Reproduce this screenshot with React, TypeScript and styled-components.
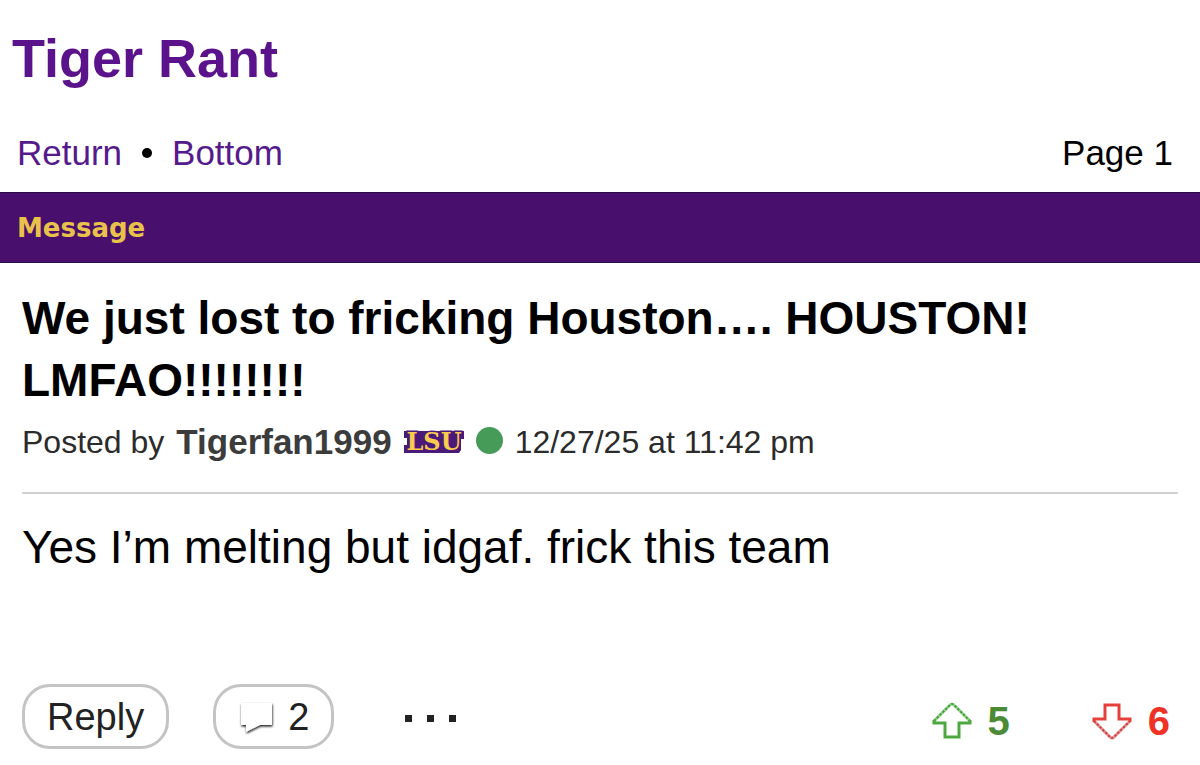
import React from "react";
import styled, { createGlobalStyle } from "styled-components";

const GlobalStyle = createGlobalStyle`
  * { box-sizing: border-box; }
  body {
    margin: 0;
    background: #fff;
    color: #000;
    font-family: "Liberation Sans", Arial, Helvetica, sans-serif;
  }
`;

const BoardHeader = styled.header`
  padding: 27px 12px 0;
`;

const BoardTitle = styled.h1`
  margin: 0;
  font-size: 54px;
  line-height: 62px;
  font-weight: 700;
  color: #5b138b;
`;

const TopicNav = styled.nav`
  display: flex;
  align-items: center;
  gap: 20px;
  padding: 43px 27px 18px 17px;
  font-size: 35px;
  line-height: 42px;
`;

const NavLink = styled.a`
  color: #551a8b;
  text-decoration: none;
`;

const Bullet = styled.span`
  width: 10px;
  height: 10px;
  border-radius: 50%;
  background: #000;
`;

const PageLabel = styled.span`
  margin-left: auto;
`;

const ColumnBar = styled.h2`
  margin: 0;
  padding: 19px 17px 18px;
  background: #490f6c;
  border-top: 1px solid #2e0a4a;
  border-bottom: 1px solid #2e0a4a;
  color: #e8c24a;
  font: 700 26px/32px "DejaVu Sans", Verdana, sans-serif;
`;

const Post = styled.article`
  padding: 24px 22px 16px;
`;

const PostTitle = styled.h3`
  margin: 0;
  font-size: 46px;
  line-height: 62px;
  font-weight: 700;
`;

const Byline = styled.div`
  display: flex;
  align-items: center;
  gap: 12px;
  padding: 10px 0 29px;
  border-bottom: 2px solid #d2d2d2;
  font-size: 32px;
  line-height: 42px;
  color: #2b2b2b;
`;

const Author = styled.a`
  font-size: 35px;
  font-weight: 700;
  color: #3c3c3c;
  text-decoration: none;
`;

const OnlineDot = styled.span`
  width: 27px;
  height: 27px;
  border-radius: 50%;
  background: #459b57;
  margin-bottom: 4px;
`;

const PostBody = styled.p`
  margin: 0;
  padding: 23px 0 107px;
  font-size: 46px;
  line-height: 60px;
`;

const Actions = styled.footer`
  display: flex;
  align-items: center;
`;

const PillButton = styled.button`
  display: flex;
  align-items: center;
  gap: 12px;
  height: 65px;
  margin: 0 44px 0 0;
  padding: 0 22px;
  border: 3px solid #c4c4c4;
  border-radius: 28px;
  background: #fff;
  color: #222;
  font: 400 38px/44px "Liberation Sans", Arial, sans-serif;
`;

const MoreButton = styled.button`
  display: flex;
  margin: 0;
  padding: 26px 26px 22px;
  border: 0;
  background: none;
`;

const Votes = styled.div`
  display: flex;
  gap: 82px;
  margin-left: auto;
  padding: 8px 8px 0 0;
`;

const VoteButton = styled.button<{ $color: string }>`
  display: flex;
  align-items: center;
  gap: 16px;
  margin: 0;
  padding: 0;
  border: 0;
  background: none;
  color: ${(p) => p.$color};
  font: 700 40px/46px "Liberation Sans", Arial, sans-serif;
`;

const TeamLogo = () => (
  <svg width="60" height="24" viewBox="0 0 60 24" overflow="visible" role="img" aria-label="LSU">
    <path d="M0 1H60V9H57V20L55 23H0V15H3V8H0Z" fill="#4b1a78" />
    <text
      x="30"
      y="20"
      textAnchor="middle"
      fontFamily="DejaVu Serif, serif"
      fontWeight="700"
      fontSize="24"
      fill="#f9c950"
      stroke="#4b1a78"
      strokeWidth="3"
      paintOrder="stroke"
    >
      LSU
    </text>
  </svg>
);

const CommentIcon = () => (
  <svg width="38" height="38" viewBox="0 0 38 38" aria-hidden="true">
    <defs>
      <filter id="bubble-shadow" x="-20%" y="-20%" width="150%" height="150%">
        <feDropShadow dx="0.5" dy="1.5" stdDeviation="1.2" floodColor="#000" floodOpacity="0.9" />
      </filter>
    </defs>
    <path d="M3 5H34V27H22L8 34V27H3Z" fill="#fff" filter="url(#bubble-shadow)" />
  </svg>
);

const VoteArrow = ({ down = false }: { down?: boolean }) => {
  const edge = down ? "#e5413c" : "#4da93f";
  const soft = down ? "#f08f8f" : "#8fd685";
  const dash = down ? "#c04848" : "#4c9a43";
  return (
    <svg width="40" height="38" viewBox="0 0 40 38" aria-hidden="true">
      <g transform={down ? "matrix(1 0 0 -1 0 38)" : undefined} fill="none">
        <path d="M2 19L18 3Q20 1 22 3L38 19" stroke={soft} strokeWidth="3" />
        <path d="M2 19L18 3Q20 1 22 3L38 19" stroke={dash} strokeWidth="2" strokeDasharray="2.4 1.6" />
        <path d="M2 18V21H13V35H27V21H38V18" stroke={edge} strokeWidth="3" />
      </g>
    </svg>
  );
};

export default function App() {
  return (
    <>
      <GlobalStyle />
      <BoardHeader>
        <BoardTitle>Tiger Rant</BoardTitle>
      </BoardHeader>
      <TopicNav>
        <NavLink href="#return">Return</NavLink>
        <Bullet />
        <NavLink href="#bottom">Bottom</NavLink>
        <PageLabel>Page 1</PageLabel>
      </TopicNav>
      <ColumnBar>Message</ColumnBar>
      <Post>
        <PostTitle>We just lost to fricking Houston…. HOUSTON! LMFAO!!!!!!!!</PostTitle>
        <Byline>
          <span>Posted by</span>
          <Author href="#author">Tigerfan1999</Author>
          <TeamLogo />
          <OnlineDot />
          <time>12/27/25 at 11:42 pm</time>
        </Byline>
        <PostBody>Yes I’m melting but idgaf. frick this team</PostBody>
        <Actions id="bottom">
          <PillButton>Reply</PillButton>
          <PillButton aria-label="2 comments">
            <CommentIcon />2
          </PillButton>
          <MoreButton aria-label="More options">
            <svg width="54" height="8" viewBox="0 0 54 8" fill="#222">
              <rect x="1" width="7" height="7" />
              <rect x="23" width="7" height="7" />
              <rect x="45" width="7" height="7" />
            </svg>
          </MoreButton>
          <Votes>
            <VoteButton $color="#4b8b36" aria-label="Upvote, 5">
              <VoteArrow />5
            </VoteButton>
            <VoteButton $color="#ee3226" aria-label="Downvote, 6">
              <VoteArrow down />6
            </VoteButton>
          </Votes>
        </Actions>
      </Post>
    </>
  );
}
